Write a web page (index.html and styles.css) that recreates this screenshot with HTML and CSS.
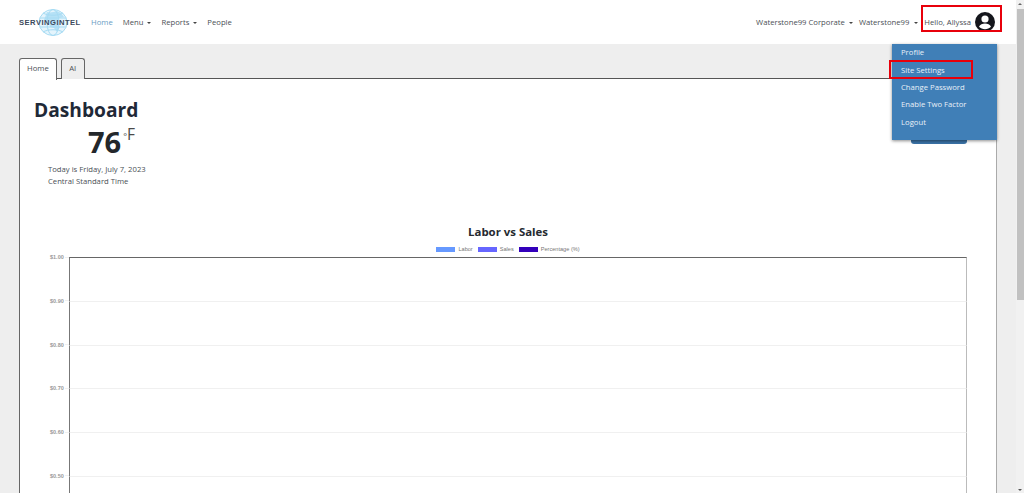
FILE: index.html
```html
<!DOCTYPE html>
<html lang="en">
<head>
<meta charset="utf-8">
<title>Dashboard</title>
<link rel="stylesheet" href="styles.css">
</head>
<body>
<header class="topbar">
  <a class="brand">
    <svg class="globe" width="30" height="27" viewBox="0 0 30 27" aria-hidden="true">
      <ellipse cx="15" cy="13.500" rx="14" ry="13" fill="#e4f4fc"/>
      <path d="M9 3c3 1 7 0 10-1 3 1 5 3 7 6l-5 1-2 5 3 4-3 5-3-4-4-1-1-5-5-2z" fill="#b5e1f6"/>
      <g fill="none" stroke="#a6dbf3" stroke-width="1">
        <ellipse cx="15" cy="13.500" rx="14" ry="13"/>
        <ellipse cx="15" cy="13.500" rx="6" ry="13"/>
        <path d="M2 9h26M2 18h26M5 4c5 3 15 3 20 0M5 23c5-3 15-3 20 0"/>
      </g>
    </svg>
    <span class="brand-text">SERVINGINTEL</span>
  </a>
  <nav class="nav">
    <a class="nav-link active">Home</a>
    <a class="nav-link caret">Menu</a>
    <a class="nav-link caret">Reports</a>
    <a class="nav-link">People</a>
  </nav>
  <div class="account">
    <a class="nav-link caret">Waterstone99 Corporate</a>
    <a class="nav-link caret wide">Waterstone99</a>
    <a class="user">
      <span>Hello, Allyssa</span>
      <svg width="20" height="20" viewBox="0 0 20 20" aria-hidden="true">
        <circle cx="10" cy="10" r="10" fill="#14161c"/>
        <circle cx="10" cy="7" r="3.600" fill="#fff"/>
        <path d="M4 14.700c1-2.300 3.500-3.300 6-3.300s5 1 6 3.300c-1.500 1.600-3.700 2.500-6 2.500s-4.500-.9-6-2.500z" fill="#fff"/>
      </svg>
    </a>
  </div>
</header>

<main class="content">
  <div class="tabs">
    <a class="tab current">Home</a>
    <a class="tab">AI</a>
  </div>
  <section class="panel">
    <h1 class="title">Dashboard</h1>
    <div class="weather">
      <span class="temp">76</span><span class="unit"><small>°</small>F</span>
    </div>
    <p class="date">Today is Friday, July 7, 2023<br>Central Standard Time</p>
    <h2 class="chart-title">Labor vs Sales</h2>
    <ul class="legend">
      <li><i class="swatch labor"></i>Labor</li>
      <li><i class="swatch sales"></i>Sales</li>
      <li><i class="swatch pct"></i>Percentage (%)</li>
    </ul>
    <div class="chart">
      <div class="row"><span class="tick">$1.00</span><div class="line first"></div></div>
      <div class="row"><span class="tick">$0.90</span><div class="line"></div></div>
      <div class="row"><span class="tick">$0.80</span><div class="line"></div></div>
      <div class="row"><span class="tick">$0.70</span><div class="line"></div></div>
      <div class="row"><span class="tick">$0.60</span><div class="line"></div></div>
      <div class="row"><span class="tick">$0.50</span><div class="line"></div></div>
    </div>
  </section>
</main>

<div class="menu-stub"></div>
<ul class="dropdown">
  <li>Profile</li>
  <li>Site Settings</li>
  <li>Change Password</li>
  <li>Enable Two Factor</li>
  <li>Logout</li>
</ul>
<div class="mark mark-user"></div>
<div class="mark mark-settings"></div>
<div class="scrollbar"><span class="arrow up"></span><span class="thumb"></span><span class="arrow down"></span></div>
</body>
</html>
```

FILE: styles.css
```css
* { box-sizing: border-box; }
html, body { margin: 0; height: 493px; overflow: hidden; }
body {
  width: 1024px;
  background: #eee;
  font-family: "Open Sans", "Liberation Sans", sans-serif;
  font-size: 7.700px;
  color: #4a4f55;
}
.topbar {
  height: 44px;
  width: 1016px;
  background: #fff;
  display: flex;
  align-items: center;
  padding-left: 19px;
}
.brand { position: relative; width: 62px; height: 27px; display: flex; align-items: center; }
.globe { position: absolute; left: 19px; top: 0; }
.brand-text {
  position: relative;
  font-family: "Liberation Sans", sans-serif;
  font-weight: 700;
  font-size: 7.600px;
  letter-spacing: 0.480px;
  color: #3c4a5c;
  white-space: nowrap;
}
.nav { display: flex; gap: 10px; margin-left: 10px; }
.nav-link { white-space: nowrap; color: #4a4f55; }
.nav-link.active { color: #6a9cc4; }
.caret::after {
  content: "";
  display: inline-block;
  margin-left: 4px;
  vertical-align: 1px;
  border-top: 2.500px solid #444;
  border-left: 2px solid transparent;
  border-right: 2px solid transparent;
}
.account { margin-left: auto; display: flex; align-items: center; gap: 6px; padding-right: 21px; }
.wide::after { margin-left: 5px; }
.user { display: flex; align-items: center; gap: 4px; }
.content { padding: 14px 0 0 19px; width: 997px; }
.tabs { display: flex; gap: 4px; height: 21px; position: relative; z-index: 1; }
.tab {
  height: 21px;
  padding: 4px 7.500px 0;
  border: 1px solid #666;
  border-bottom: 0;
  border-radius: 3px 3px 0 0;
  background: #eee;
}
.tab.current { background: #fff; height: 22px; padding: 4px 7px 0; }
.panel {
  height: 430px;
  background: #fff;
  border: 1px solid #666;
  border-top-color: #555;
  border-right-color: #aaa;
  padding: 20px 0 0 14px;
  margin-top: -1px;
}
.title { margin: 0; font-size: 19.200px; line-height: 22px; font-weight: 700; color: #1f2937; }
.weather { margin: 3px 0 0 54px; display: flex; align-items: flex-start; height: 36px; }
.temp { font-size: 29px; line-height: 36px; font-weight: 700; color: #23272b; }
.unit { font-size: 15.500px; line-height: 21px; color: #4a4a4a; margin-left: 2px; }
.unit small { font-size: 9px; }
.date { margin: 3px 0 0 14px; line-height: 12px; }
.chart-title { margin: 36px 0 0 -14px; text-align: center; font-size: 11.400px; line-height: 17px; font-weight: 700; color: #262a30; }
.legend {
  list-style: none;
  margin: 6px 0 0 -14px;
  padding: 0;
  display: flex;
  justify-content: center;
  gap: 5px;
  font-family: "Liberation Sans", sans-serif;
  font-size: 5.600px;
  line-height: 6px;
  color: #777;
}
.legend li { display: flex; align-items: center; gap: 3px; }
.swatch { width: 19px; height: 5px; }
.labor { background: #6699ff; }
.sales { background: #6666ff; }
.pct { background: #3300bb; }
.chart { margin-top: 5px; padding-right: 29px; }
.row { display: flex; align-items: flex-start; height: 43.800px; }
.tick {
  display: flex;
  align-items: center;
  gap: 1px;
  flex: 0 0 19px;
  margin: -3px 0 0 16px;
  height: 6px;
  font-family: "Liberation Sans", sans-serif;
  font-size: 5.500px;
  font-weight: 700;
  color: #999;
}
.tick::after { content: ""; flex: 1; height: 1px; background: #f0f0f0; }
.line {
  flex: 1;
  height: 43.800px;
  border-left: 1px solid #777;
  border-right: 1px solid #bbb;
  border-top: 1px solid #f0f0f0;
}
.line.first { border-top-color: #666; }
.dropdown {
  position: absolute;
  left: 892px;
  top: 44px;
  width: 105px;
  height: 96px;
  margin: 0;
  padding: 0.200px 0 0 9px;
  list-style: none;
  background: #407fb7;
  color: #e8f0f8;
  box-shadow: 0 1px 3px rgba(0,0,0,.45);
}
.dropdown li { height: 17.400px; line-height: 17.400px; }
.menu-stub {
  position: absolute;
  left: 911px;
  top: 130px;
  width: 56px;
  height: 14px;
  background: #3a72a6;
  border-radius: 0 0 3px 3px;
}
.mark { position: absolute; border: 2px solid #e8000b; }
.mark-user { left: 921px; top: 5px; width: 81px; height: 27px; }
.mark-settings { left: 889px; top: 60px; width: 84px; height: 19px; }
.scrollbar {
  position: absolute;
  left: 1016px;
  top: 0;
  width: 8px;
  height: 493px;
  background: #f1f1f1;
  display: flex;
  flex-direction: column;
  align-items: center;
}
.thumb { width: 7px; height: 291px; margin-top: 4px; background: #c1c1c1; }
.arrow { width: 0; height: 0; border-left: 2px solid transparent; border-right: 2px solid transparent; }
.arrow.up { margin-top: 3px; border-bottom: 2px solid #666; }
.arrow.down { margin-top: auto; margin-bottom: 2px; border-top: 2px solid #555; }
```
